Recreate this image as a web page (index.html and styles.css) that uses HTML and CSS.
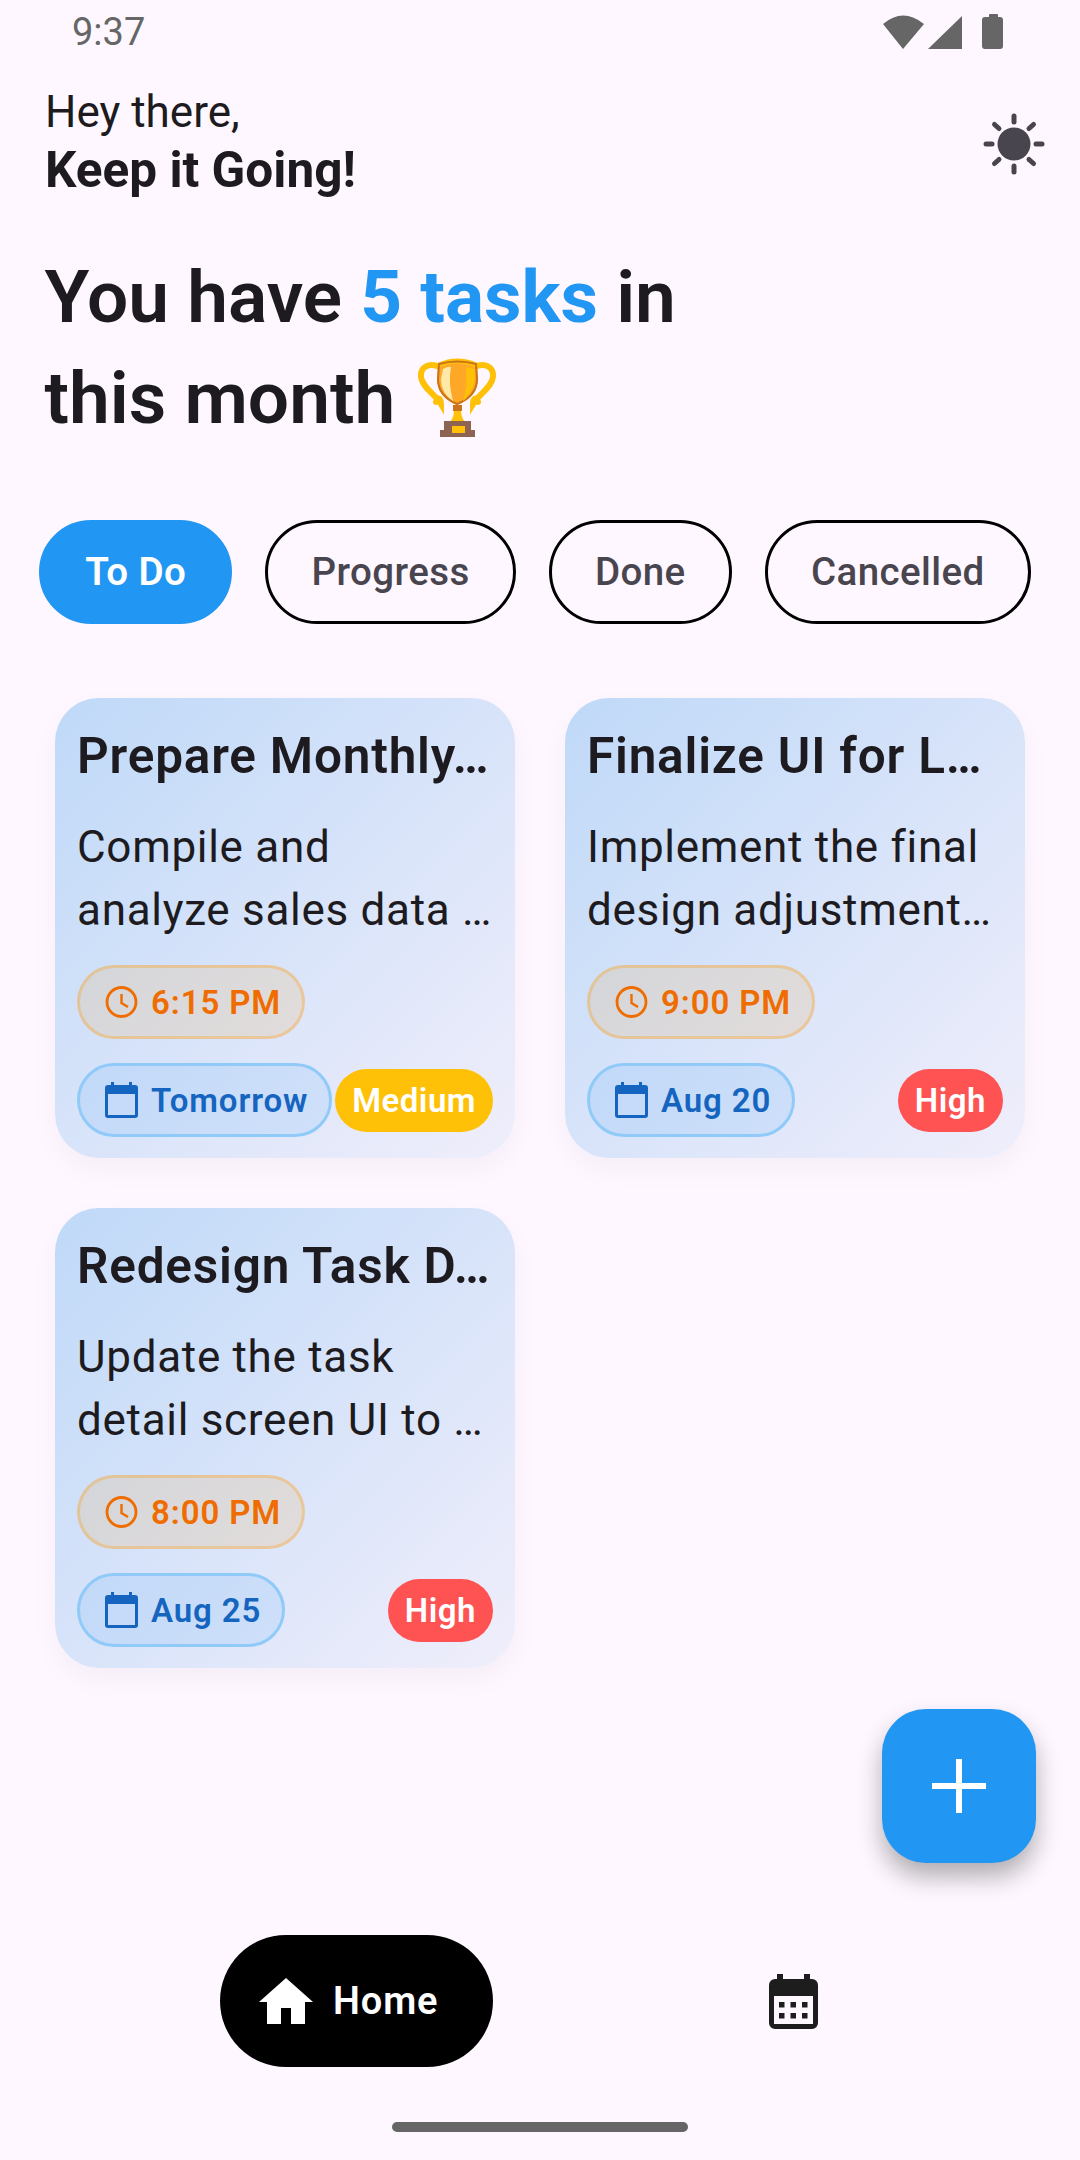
FILE: index.html
```html
<!DOCTYPE html>
<html lang="en">
  <head>
    <meta charset="utf-8" />
    <meta name="viewport" content="width=device-width, initial-scale=1" />
    <title>Tasks</title>
    <link rel="stylesheet" href="styles.css">
  </head>
  <body>
    <div class="page">
      <!-- status bar -->
      <div class="status">
        <span class="status-time">9:37</span>
        <svg class="status-icons" width="120" height="36" viewBox="0 0 120 36">
          <path d="M0 10 Q20 -7 41 10 L20 35 Z" fill="#666"/>
          <path d="M45 35 L79 2 V35 Z" fill="#666"/>
          <path d="M106 3 V1 a1 1 0 0 1 1 -1 h7 a1 1 0 0 1 1 1 v2 h2 a3 3 0 0 1 3 3 V32 a3 3 0 0 1 -3 3 H102 a3 3 0 0 1 -3 -3 V6 a3 3 0 0 1 3 -3 Z" fill="#666"/>
        </svg>
      </div>

      <div class="header">
        <div class="greeting">
          <div>Hey there,</div>
          <div class="greeting-bold">Keep it Going!</div>
        </div>
        <svg class="sun" width="62" height="62" viewBox="0 0 62 62">
          <circle cx="31" cy="31" r="16.5" fill="#49454F"/>
          <g stroke="#49454F" stroke-width="5" stroke-linecap="round">
            <path d="M31 3 V9"/>
            <path d="M31 53 V59"/>
            <path d="M3 31 H9"/>
            <path d="M53 31 H59"/>
            <path d="M11.5 11.5 L16 15.5"/>
            <path d="M46 46.5 L50.5 50.5"/>
            <path d="M50.5 11.5 L46 15.5"/>
            <path d="M16 46.5 L11.5 50.5"/>
          </g>
        </svg>
      </div>

      <h1 class="headline">
        You have <span class="headline-blue">5 tasks</span> in<br>
        this month
        <svg class="trophy" width="100" height="100" viewBox="0 0 100 100">
          <path d="M33 18 C22 13 13 18 14 28 C15 38 28 45 34 55 C34 50 31 47 29 53" fill="none" stroke="#FFC107" stroke-width="6" stroke-linecap="round"/>
          <path d="M67 18 C78 13 87 18 86 28 C85 38 72 45 66 55 C66 50 69 47 71 53" fill="none" stroke="#FFC107" stroke-width="6" stroke-linecap="round"/>
          <path d="M31 16 Q50 6 70 16 L71 30 Q71 48 50 56 Q30 48 30 30 Z" fill="#FFA726"/>
          <path d="M32 16 Q50 8 69 16" fill="none" stroke="#FFC107" stroke-width="5"/>
          <path d="M32 15 Q50 10 69 15 L70 30 Q70 47 50 55 Q31 47 31 30 Z" fill="none" stroke="#C9741A" stroke-width="2"/>
          <path d="M36 20 Q41 17 44 18 Q41 34 46 52 Q34 44 34 30 Z" fill="#FFE9A8"/>
          <path d="M59 18 L68 20 Q69 42 56 52 Q61 36 59 18 Z" fill="#FFC107"/>
          <rect x="46" y="56" width="9" height="6" fill="#C9741A"/>
          <path d="M47 62 H54 Q54 70 61 76 H40 Q47 70 47 62 Z" fill="#FFC107"/>
          <rect x="37" y="72" width="27" height="16" fill="#8D6352"/>
          <rect x="33" y="81" width="35" height="7" fill="#8D6352"/>
          <rect x="45" y="77" width="13" height="7" fill="#FFC107"/>
        </svg>
      </h1>

      <div class="tabs">
        <div class="tab tab-active">To Do</div>
        <div class="tab">Progress</div>
        <div class="tab">Done</div>
        <div class="tab">Cancelled</div>
      </div>

      <div class="cards">
        <div class="card">
          <div class="card-title">Prepare Monthly…</div>
          <div class="card-text">Compile and<br>analyze sales data …</div>
          <div class="pill pill-time">
            <svg class="pill-icon" viewBox="0 0 33 33"><circle cx="16.5" cy="16.5" r="14.5" fill="none" stroke="currentColor" stroke-width="2.8"/><path d="M16.5 8.5 V17.5 L23 21.5" fill="none" stroke="currentColor" stroke-width="2.4"/></svg>
            6:15 PM
          </div>
          <div class="card-bottom">
            <div class="pill pill-date">
              <svg class="pill-icon" viewBox="0 0 33 36"><path d="M6 0 h3 v3 h15 v-3 h3 v3 h3 a3 3 0 0 1 3 3 v27 a3 3 0 0 1 -3 3 h-27 a3 3 0 0 1 -3 -3 v-27 a3 3 0 0 1 3 -3 h3 Z M3 12 v21 h27 v-21 Z" fill="currentColor" fill-rule="evenodd"/></svg>
              Tomorrow
            </div>
            <div class="priority priority-medium">Medium</div>
          </div>
        </div>

        <div class="card">
          <div class="card-title">Finalize UI for L…</div>
          <div class="card-text">Implement the final<br>design adjustment…</div>
          <div class="pill pill-time">
            <svg class="pill-icon" viewBox="0 0 33 33"><circle cx="16.5" cy="16.5" r="14.5" fill="none" stroke="currentColor" stroke-width="2.8"/><path d="M16.5 8.5 V17.5 L23 21.5" fill="none" stroke="currentColor" stroke-width="2.4"/></svg>
            9:00 PM
          </div>
          <div class="card-bottom">
            <div class="pill pill-date">
              <svg class="pill-icon" viewBox="0 0 33 36"><path d="M6 0 h3 v3 h15 v-3 h3 v3 h3 a3 3 0 0 1 3 3 v27 a3 3 0 0 1 -3 3 h-27 a3 3 0 0 1 -3 -3 v-27 a3 3 0 0 1 3 -3 h3 Z M3 12 v21 h27 v-21 Z" fill="currentColor" fill-rule="evenodd"/></svg>
              Aug 20
            </div>
            <div class="priority priority-high">High</div>
          </div>
        </div>

        <div class="card">
          <div class="card-title">Redesign Task D…</div>
          <div class="card-text">Update the task<br>detail screen UI to …</div>
          <div class="pill pill-time">
            <svg class="pill-icon" viewBox="0 0 33 33"><circle cx="16.5" cy="16.5" r="14.5" fill="none" stroke="currentColor" stroke-width="2.8"/><path d="M16.5 8.5 V17.5 L23 21.5" fill="none" stroke="currentColor" stroke-width="2.4"/></svg>
            8:00 PM
          </div>
          <div class="card-bottom">
            <div class="pill pill-date">
              <svg class="pill-icon" viewBox="0 0 33 36"><path d="M6 0 h3 v3 h15 v-3 h3 v3 h3 a3 3 0 0 1 3 3 v27 a3 3 0 0 1 -3 3 h-27 a3 3 0 0 1 -3 -3 v-27 a3 3 0 0 1 3 -3 h3 Z M3 12 v21 h27 v-21 Z" fill="currentColor" fill-rule="evenodd"/></svg>
              Aug 25
            </div>
            <div class="priority priority-high">High</div>
          </div>
        </div>
      </div>

      <div class="fab">
        <svg width="56" height="56" viewBox="0 0 56 56"><path d="M28 1 V55 M1 28 H55" stroke="#fff" stroke-width="6"/></svg>
      </div>

      <!-- bottom nav -->
      <div class="nav">
        <div class="nav-home">
          <svg width="54" height="46" viewBox="0 0 54 46"><path d="M27 0 L54 24 H46 V46 H32 V30 H22 V46 H8 V24 H0 Z" fill="#fff"/></svg>
          Home
        </div>
        <svg class="nav-calendar" width="49" height="55" viewBox="0 0 49 55">
          <path d="M8 5 V0 H14 V5 H35 V0 H41 V5 H43 A6 6 0 0 1 49 11 V49 A6 6 0 0 1 43 55 H6 A6 6 0 0 1 0 49 V11 A6 6 0 0 1 6 5 Z M5 22 V50 H44 V22 Z" fill="#1D1D1D" fill-rule="evenodd"/>
          <path d="M8 28 h5.500 v5.500 h-5.500 Z M19.500 28 h5.500 v5.500 h-5.500 Z M31 28 h5.500 v5.500 h-5.500 Z M8 39 h5.500 v5.500 h-5.500 Z M19.500 39 h5.500 v5.500 h-5.500 Z M31 39 h5.500 v5.500 h-5.500 Z" transform="translate(2 0)" fill="#1D1D1D"/>
        </svg>
      </div>

      <div class="home-bar"></div>
    </div>
  </body>
</html>
```

FILE: styles.css
```css
*{
  box-sizing: border-box;
}

body{
  margin: 0;
  background-color: #FEF7FF;
  font-family: Roboto, "Noto Sans", sans-serif;
  color: #1D1B20;
}

.page{
  position: relative;
  display: flex;
  flex-direction: column;
  width: 1080px;
  height: 2160px;
  overflow: hidden;
}

.status{
  display: flex;
  justify-content: space-between;
  align-items: flex-start;
  height: 83px;
  padding: 10px 77px 0 72px;
}

.status-time{
  font-size: 38px;
  line-height: 44px;
  color: #666;
}

.status-icons{
  margin-top: 4px;
}

.header{
  display: flex;
  justify-content: space-between;
  align-items: center;
  padding: 0 35px 0 45px;
}

.greeting{
  font-size: 44px;
  line-height: 58px;
}

.greeting-bold{
  font-size: 49.5px;
  font-weight: 700;
}

.sun{
  margin-top: 6px;
}

.headline{
  margin: 48px 0 0 0;
  padding-left: 44.5px;
  font-size: 73px;
  line-height: 101px;
  font-weight: 600;
}

.headline-blue{
  color: #2196F3;
  font-weight: 700;
}

.trophy{
  vertical-align: -26px;
  margin-left: -6px;
}

.tabs{
  display: flex;
  gap: 33px;
  margin-top: 71px;
  padding-left: 39px;
}

.tab{
  height: 104px;
  padding: 0 43.2px;
  border: 3px solid #000;
  border-radius: 52px;
  font-size: 38.5px;
  font-weight: 500;
  letter-spacing: 0.4px;
  line-height: 98px;
  color: #49454F;
}

.tab-active{
  border-color: #2196F3;
  background-color: #2196F3;
  color: #fff;
  font-weight: 600;
}

.cards{
  display: grid;
  grid-template-columns: 460px 460px;
  gap: 50px;
  margin-top: 74px;
  padding: 0 55px;
}

.card{
  height: 460px;
  padding: 28px 22px 0 22px;
  border-radius: 44px;
  background: linear-gradient(135deg, #BFD9F8, #F0EEFB);
  box-shadow: 0 11px 28px rgba(0, 0, 0, 0.04);
}

.card-title{
  font-size: 49.5px;
  line-height: 60px;
  font-weight: 600;
  letter-spacing: 0.8px;
  white-space: nowrap;
}

.card-text{
  margin-top: 30px;
  font-size: 44px;
  line-height: 63px;
  letter-spacing: 0.7px;
  white-space: nowrap;
}

.pill{
  display: flex;
  align-items: center;
  gap: 13px;
  width: fit-content;
  height: 74px;
  padding: 0 21px 0 25px;
  border: 3px solid;
  border-radius: 37px;
  font-size: 33px;
  font-weight: 600;
  letter-spacing: 0.9px;
}

.pill-icon{
  width: 33px;
  height: 36px;
}

.pill-time{
  margin-top: 23px;
  color: #EF6C00;
  border-color: rgba(255, 152, 0, 0.3);
  background-color: rgba(255, 152, 0, 0.12);
}

.pill-date{
  color: #1565C0;
  border-color: #90CAF9;
  background-color: rgba(33, 150, 243, 0.1);
}

.card-bottom{
  display: flex;
  justify-content: space-between;
  align-items: center;
  margin-top: 24px;
}

.priority{
  height: 63px;
  padding: 0 17px;
  border-radius: 32px;
  font-size: 33px;
  font-weight: 600;
  letter-spacing: 0.5px;
  line-height: 63px;
  color: #fff;
}

.priority-medium{
  background-color: #FFC107;
}

.priority-high{
  background-color: #FF5252;
}

.fab{
  position: absolute;
  left: 882px;
  top: 1709px;
  display: flex;
  justify-content: center;
  align-items: center;
  width: 154px;
  height: 154px;
  border-radius: 44px;
  background-color: #2196F3;
  box-shadow: 0 14px 24px rgba(0, 0, 0, 0.3);
}

.nav{
  display: flex;
  align-items: center;
  gap: 276px;
  margin-top: auto;
  padding-left: 220px;
}

.nav-home{
  display: flex;
  align-items: center;
  gap: 20px;
  width: 273px;
  height: 132px;
  padding-left: 39px;
  border-radius: 66px;
  background-color: #000;
  color: #fff;
  font-size: 38px;
  font-weight: 600;
  letter-spacing: 0.9px;
}

.home-bar{
  width: 296px;
  height: 10px;
  margin: 55px auto 28px auto;
  border-radius: 5px;
  background-color: #666;
}
```
